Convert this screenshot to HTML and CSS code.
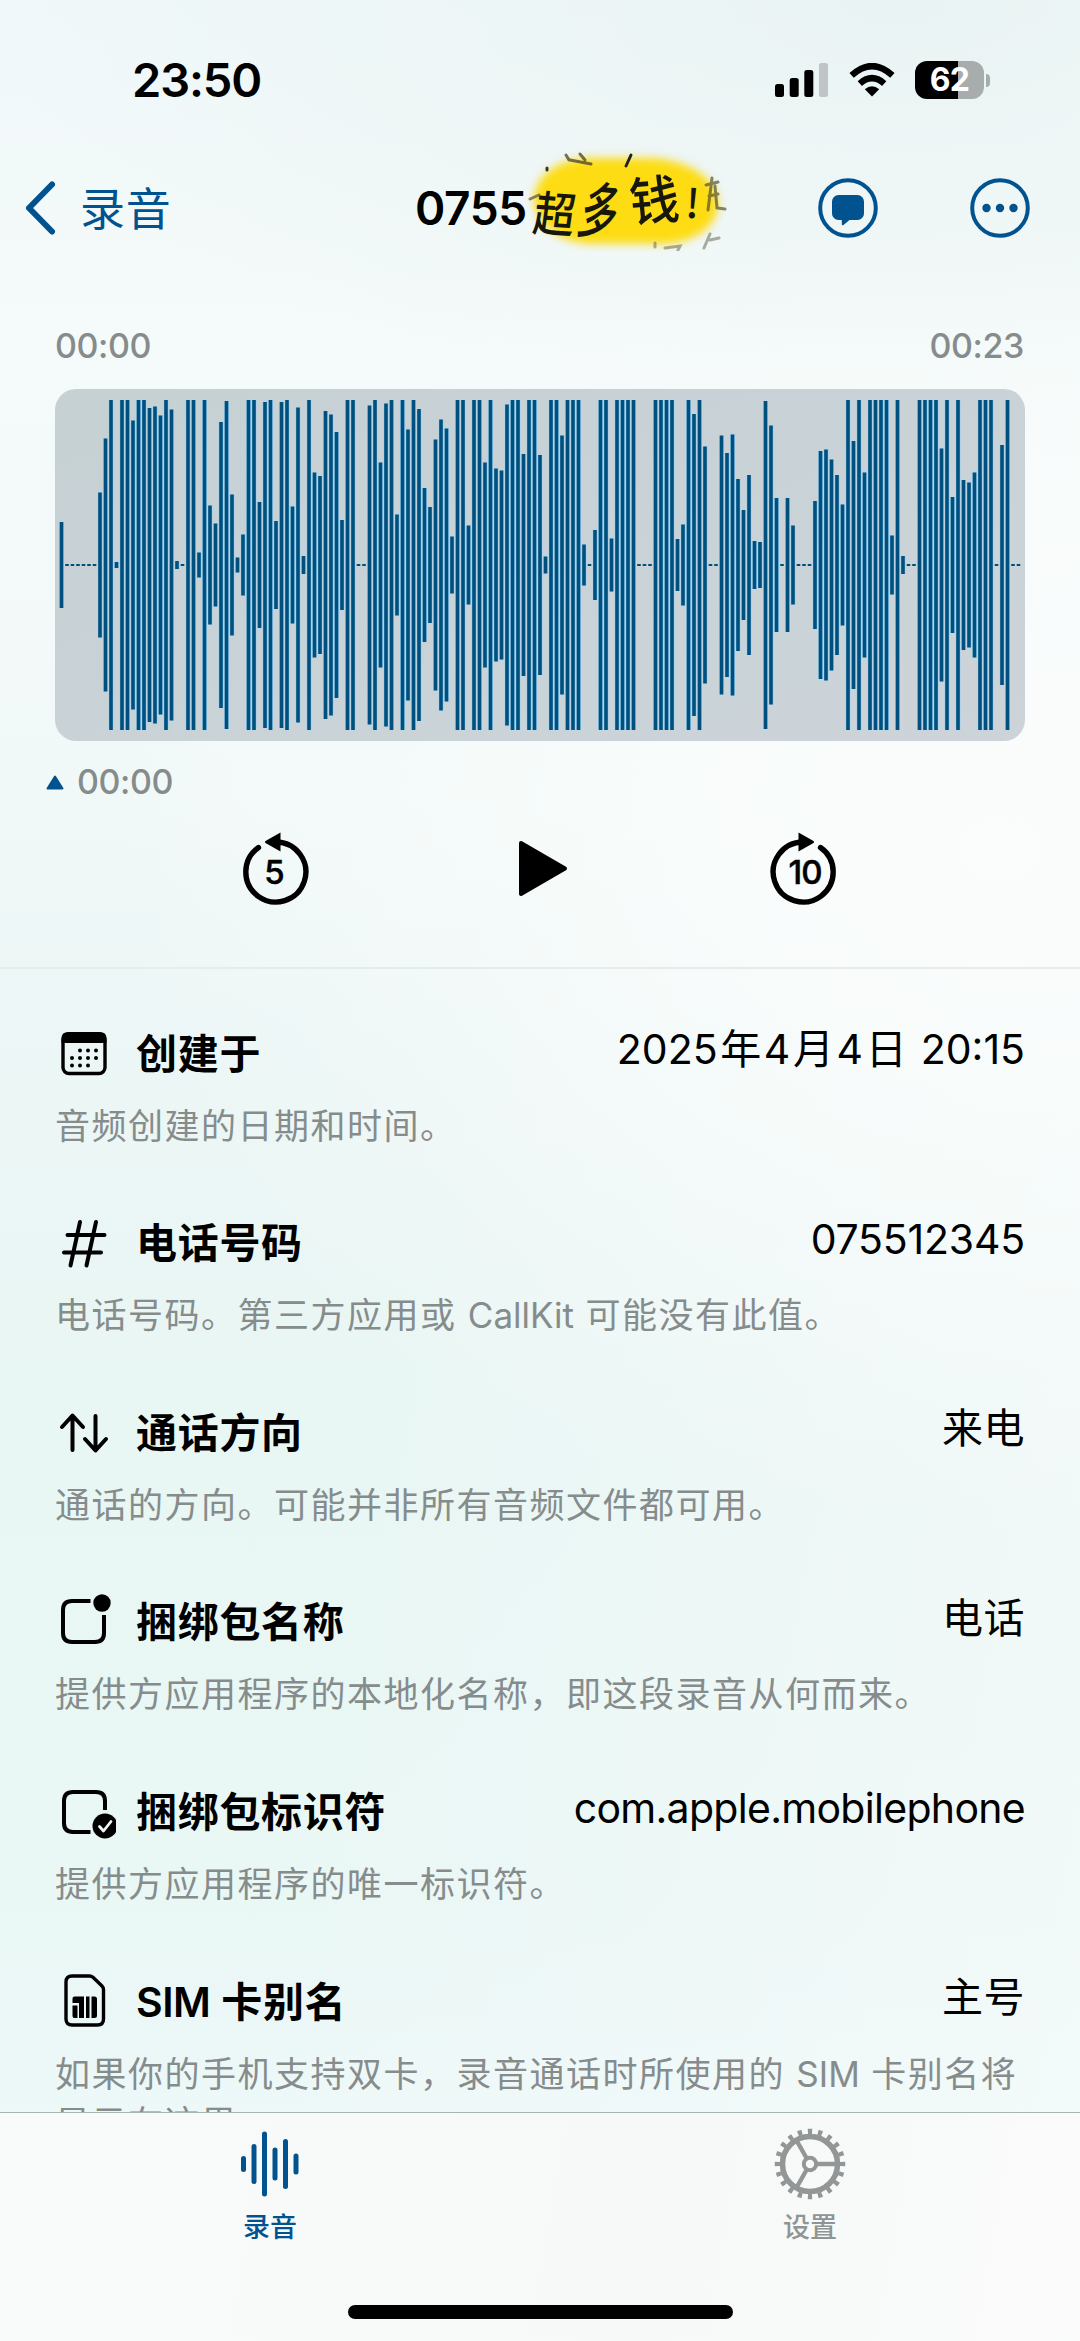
FILE: index.html
```html
<!DOCTYPE html>
<html lang="zh-CN">
<head>
<meta charset="utf-8">
<title>录音</title>
<link rel="stylesheet" href="styles.css">
</head>
<body>
<div class="screen">
  <header class="status">
    <span class="clock">23:50</span>
    <div class="status-icons">
      <svg width="54" height="36" viewBox="0 0 54 36"><rect x="0" y="22" width="9" height="13" rx="2.5"/><rect x="14.7" y="16" width="9" height="19" rx="2.5"/><rect x="29.3" y="8" width="9" height="27" rx="2.5"/><rect x="44" y="1" width="9" height="34" rx="2.5" fill="#bfc5c6"/></svg>
      <svg width="46" height="34" viewBox="0 0 46 34"><path d="M23 33.5 15.8 26.2Q23 20.2 30.2 26.2Z"/><path d="M10.8 20.6Q23 9.8 35.2 20.6" fill="none" stroke="#000" stroke-width="6.4"/><path d="M2.6 12.4Q23-6.2 43.4 12.4" fill="none" stroke="#000" stroke-width="6.4"/></svg>
      <div class="battery"><span class="battery-body">62</span><span class="battery-tip"></span></div>
    </div>
  </header>

  <nav class="nav">
    <a class="back"><svg width="32" height="54" viewBox="0 0 32 54"><path d="M28 3.5 5 27 28 50.5" fill="none" stroke="#00538f" stroke-width="6" stroke-linecap="round" stroke-linejoin="round"/></svg><span>录音</span></a>
    <div class="title">
      <span class="number">0755</span>
      <div class="sticker">
        <svg class="scraps" width="200" height="100" viewBox="0 0 200 100" fill="none" stroke="#3a3720" stroke-width="3" stroke-linecap="round"><path d="M38 4 41 9M42 9 63 13M52 3 57 9" opacity=".7"/><path d="M103 4 98 15" stroke="#222"/><path d="M19 17v2"/><path d="M2 48 11 44" opacity=".6"/><path d="M178 34 190 31M184 27 180 59M181 45 190 43M187 35 189 57 197 58" opacity=".6"/><path d="M127 96v-4M137 97 152 95 150 99M176 97l6-14M182 89l9-2" opacity=".4"/></svg>
        <span class="ink ink-a">超</span><span class="ink ink-b">多</span><span class="ink ink-c">钱</span><span class="ink ink-d">!</span>
      </div>
    </div>
    <div class="actions">
      <svg width="60" height="60" viewBox="0 0 60 60"><circle cx="30" cy="30" r="27.8" fill="none" stroke="#00538f" stroke-width="4"/><path d="M20.500 17h19a6.500 6.500 0 0 1 6.500 6.500v12a6.500 6.500 0 0 1-6.500 6.500h-8l-6 5q-1.700 1-1.700-1V42h-3.300a6.500 6.500 0 0 1-6.500-6.500v-12a6.500 6.500 0 0 1 6.500-6.500Z" fill="#00538f"/></svg>
      <svg width="60" height="60" viewBox="0 0 60 60" fill="#00538f"><circle cx="30" cy="30" r="27.800" fill="none" stroke="#00538f" stroke-width="4"/><circle cx="16.500" cy="30" r="4.200"/><circle cx="30" cy="30" r="4.200"/><circle cx="43.500" cy="30" r="4.200"/></svg>
    </div>
  </nav>

  <section class="player">
    <div class="times"><span>00:00</span><span>00:23</span></div>
    <svg class="wave" id="wave" width="970" height="352" viewBox="0 0 970 352"></svg>
    <div class="cursor"><svg width="18" height="15" viewBox="0 0 18 15"><path d="M9 1.500 16.500 13.500h-15Z" fill="#00538f" stroke="#00538f" stroke-width="2" stroke-linejoin="round"/></svg><span>00:00</span></div>
    <div class="controls">
      <svg width="70" height="80" viewBox="0 0 70 80"><path d="M19.500 17.500A30 30 0 1 0 37 12" fill="none" stroke="#000" stroke-width="5.400" stroke-linecap="round"/><path d="M41.500 2.500v19L26.500 13q-1.300-1 0-2Z"/><text class="skip" x="35" y="54" text-anchor="middle">5</text></svg>
      <svg width="52" height="58" viewBox="0 0 52 58"><path d="M4 3 48 28.500 4 54Z" stroke="#000" stroke-width="4" stroke-linejoin="round"/></svg>
      <svg width="70" height="80" viewBox="0 0 70 80"><path d="M50.500 17.500A30 30 0 1 1 33 12" fill="none" stroke="#000" stroke-width="5.400" stroke-linecap="round"/><path d="M28.500 2.500v19L43.500 13q1.300-1 0-2Z"/><text class="skip" x="35" y="54" text-anchor="middle">10</text></svg>
    </div>
  </section>

  <main class="info">
    <article class="row">
      <div class="head">
        <svg class="icon" viewBox="0 0 64 64"><rect x="11" y="13" width="42" height="39.500" rx="6" fill="none" stroke="#000" stroke-width="3.400"/><path d="M9.500 22v-5q0-6 7-6h31q7 0 7 6v5Z"/><g><circle cx="28" cy="29.500" r="2"/><circle cx="36" cy="29.500" r="2"/><circle cx="44" cy="29.500" r="2"/><circle cx="20" cy="37" r="2"/><circle cx="28" cy="37" r="2"/><circle cx="36" cy="37" r="2"/><circle cx="44" cy="37" r="2"/><circle cx="20" cy="44.500" r="2"/><circle cx="28" cy="44.500" r="2"/><circle cx="36" cy="44.500" r="2"/></g></svg>
        <h2>创建于</h2><span class="value date">2025<i>年</i>4<i>月</i>4<i>日</i> 20:15</span>
      </div>
      <p>音频创建的日期和时间。</p>
    </article>
    <article class="row">
      <div class="head">
        <svg class="icon line" viewBox="0 0 64 64"><path d="M28 11 18.500 54.500M44 11 34.500 54.500M15.500 24h37M12 41.500h37"/></svg>
        <h2>电话号码</h2><span class="value phone">075512345</span>
      </div>
      <p>电话号码。第三方应用或 <span class="latin">CallKit</span> 可能没有此值。</p>
    </article>
    <article class="row">
      <div class="head">
        <svg class="icon line" viewBox="0 0 64 64"><path d="M20.500 50V16M10 27 20.500 15.500 31 27M43.500 16V50M33 39 43.500 50.500 54 39"/></svg>
        <h2>通话方向</h2><span class="value">来电</span>
      </div>
      <p>通话的方向。可能并非所有音频文件都可用。</p>
    </article>
    <article class="row">
      <div class="head">
        <svg class="icon" viewBox="0 0 64 64"><path d="M38.500 11H20q-9 0-9 9v23q0 9 9 9h23q9 0 9-9V25" fill="none" stroke="#000" stroke-width="4"/><circle cx="50" cy="13" r="8.700"/></svg>
        <h2>捆绑包名称</h2><span class="value">电话</span>
      </div>
      <p>提供方应用程序的本地化名称，即这段录音从何而来。</p>
    </article>
    <article class="row">
      <div class="head">
        <svg class="icon" viewBox="0 0 64 64"><path d="M38.500 52H21q-9 0-9-9V21q0-9 9-9h23q9 0 9 9v9" fill="none" stroke="#000" stroke-width="4"/><circle cx="53" cy="46" r="12.500"/><path d="M47.500 46.500 51.500 51 59 41.500" fill="none" stroke="#eef7f6" stroke-width="2.800" stroke-linecap="round" stroke-linejoin="round"/></svg>
        <h2>捆绑包标识符</h2><span class="value bundle">com.apple.mobilephone</span>
      </div>
      <p>提供方应用程序的唯一标识符。</p>
    </article>
    <article class="row">
      <div class="head">
        <svg class="icon" viewBox="0 0 64 64"><path d="M20 7h17.500q2 0 3.500 1.300L50 17q1.500 1.500 1.500 3.500V50q0 6-6 6H20q-6 0-6-6V13q0-6 6-6Z" fill="none" stroke="#000" stroke-width="3.400"/><path d="M22.500 27.500h9.500V49h-5v-15h-6.500v-4.500q0-2 2-2ZM34 27.500h3.500V49H34ZM39.500 27.500h3q2.500 0 2.500 2.500v16.500q0 2.500-2.500 2.500h-3ZM20.500 36.500h5V49h-3q-2 0-2-2Z"/></svg>
        <h2><span class="latin">SIM</span> 卡别名</h2><span class="value">主号</span>
      </div>
      <p>如果你的手机支持双卡，录音通话时所使用的 <span class="latin">SIM</span> 卡别名将显示在这里。</p>
    </article>
  </main>

  <footer class="tabs">
    <div class="tab-items">
      <div class="tab active">
        <svg width="72" height="72" viewBox="0 0 72 72" fill="none" stroke="#00538f" stroke-width="5" stroke-linecap="round"><path d="M9.500 30.500v11M20 18.500v35M30.500 6v60M41 22v28M51.500 13.500v45M62 28v16"/></svg>
        <span>录音</span>
      </div>
      <div class="tab">
        <svg width="72" height="72" viewBox="0 0 72 72" fill="none" stroke="#929696"><circle cx="36" cy="36" r="27.500" stroke-width="5.500"/><circle cx="36" cy="36" r="32.500" stroke-width="5.500" pathLength="220" stroke-dasharray="4.600 6.400" stroke-dashoffset="2.300"/><circle cx="36" cy="36" r="6.200" stroke-width="4"/><path d="M43 36h19M32.500 30 22 11.500M32.500 42 22 60.500" stroke-width="4.400"/></svg>
        <span>设置</span>
      </div>
    </div>
    <div class="home"></div>
  </footer>
</div>
<script src="wave.js"></script>
</body>
</html>
```
FILE: wave.js
```js
// Peak height of every sample, in pixels; 330 is full scale and 2 is silence.
var F = 330, S = 2;
var peaks = [
  86,S,S,S,S,S,S,145,253,F,6,F,F,289,F,F,314,317,299,F,311,8,S,F,F,25,F,119,83,286,
  328,141,15,61,F,F,126,326,F,88,326,F,117,315,18,F,185,178,308,301,266,90,F,F,S,S,319,F,205,323,
  F,101,F,271,F,312,154,116,251,291,273,57,F,F,79,F,F,205,F,193,189,321,F,F,222,F,F,220,17,F,
  F,259,F,F,F,41,S,70,F,F,53,F,F,F,F,S,S,S,F,F,F,F,52,81,F,302,F,237,S,S,
  259,224,261,172,110,180,48,46,328,279,134,S,134,79,S,S,S,128,228,231,211,180,121,F,248,F,185,F,F,F,
  F,59,F,18,S,S,F,F,F,F,233,F,136,F,170,165,185,F,F,F,S,240,F,S,S
];
var svg = document.getElementById('wave');
var glow = '', bars = '';
peaks.forEach(function (h, i) {
  var x = 4.7 + i * 5.5, y = 176 - h / 2;
  if (h > S) glow += '<rect x="' + (x - 0.5) + '" y="' + y + '" width="4.7" height="' + h + '"/>';
  bars += '<rect x="' + x + '" y="' + y + '" width="3.6" height="' + h + '"/>';
});
svg.innerHTML = '<g fill="#93d0f3">' + glow + '</g><g fill="#00507f">' + bars + '</g>';
```
FILE: styles.css
```css
* { box-sizing: border-box; }
body { margin: 0; }
h2, p { margin: 0; }
svg { display: block; flex: none; }
.screen {
  width: 1080px;
  height: 2341px;
  display: flex;
  flex-direction: column;
  overflow: hidden;
  color: #000;
  font-family: Inter, "Noto Sans CJK SC", sans-serif;
  background:
    radial-gradient(900px 420px at 900px 0, #eaf3f3, transparent),
    radial-gradient(900px 700px at 1000px 850px, #fbfdfc, transparent),
    linear-gradient(100deg, rgba(231, 246, 244, 0) 40%, rgba(245, 250, 250, .8) 100%),
    linear-gradient(#f0f8f9 0, #f5fafa 350px, #f1f9f8 800px, #ecf6f6 1050px, #e8f6f4 1450px, #e9f7f5 1900px, #edf8f8 2112px);
}
.status { height: 130px; padding: 50px 90px 20px 132px; display: flex; align-items: center; justify-content: space-between; }
.clock { font-size: 47px; font-weight: 600; line-height: 60px; letter-spacing: -1.1px; }
.status-icons { display: flex; align-items: center; gap: 20px; }
.battery { display: flex; align-items: center; gap: 2px; }
.battery-body { width: 69px; height: 38px; border-radius: 12px; background: linear-gradient(90deg, #000 43.500px, #a7adad 43.500px); color: #fff; font-size: 32px; font-weight: 700; line-height: 38px; text-align: center; letter-spacing: -.8px; }
.battery-tip { width: 4px; height: 13px; border-radius: 0 5px 5px 0; background: #a7adad; }

.nav { height: 156px; padding: 0 50px 0 24px; display: grid; grid-template-columns: 391px 1fr 212px; align-items: center; }
.back { display: flex; align-items: center; gap: 24px; color: #00538f; font-size: 45px; line-height: 60px; letter-spacing: .8px; }
.back span { padding-top: 3px; }
.title { display: flex; align-items: center; }
.number { width: 112px; font-size: 46px; font-weight: 600; letter-spacing: -.4px; line-height: 60px; }
.sticker { position: relative; width: 200px; height: 100px; margin: -14px 0 0 1px; }
.sticker::before { content: ""; position: absolute; left: 6px; top: 7px; width: 184px; height: 86px; border-radius: 62px 80px 62px 66px / 46px 50px 44px 50px; background: #fddc14; filter: blur(4px); }
.scraps { position: absolute; left: 0; top: 0; }
.ink { position: absolute; color: #17170c; font-family: "Noto Sans CJK SC", sans-serif; font-weight: 500; line-height: 48px; font-size: 46px; }
.ink-a { left: 4px; top: 36px; transform: rotate(4deg) skewX(-4deg) scale(.9, 1.050); }
.ink-b { left: 50px; top: 32px; transform: rotate(6deg) skewX(-10deg) scale(.8, 1.350); }
.ink-c { left: 103px; top: 22px; transform: rotate(-5deg) scale(1.080, 1.150); }
.ink-d { left: 158px; top: 26px; transform: rotate(4deg); font-size: 40px; }
.actions { display: flex; justify-content: space-between; }

.player { height: 683px; border-bottom: 2px solid #e5eceb; padding: 38px 55px 0; }
.times { display: flex; justify-content: space-between; padding: 0 1px 0 0; }
.times, .cursor { color: #868b8b; font-size: 34px; font-weight: 500; line-height: 44px; letter-spacing: -.4px; }
.wave { margin-top: 21px; border-radius: 21px; background: linear-gradient(160deg, #c6d1d4, #ccd4da); }
.cursor { display: flex; align-items: center; gap: 13px; margin: 19px 0 0 -9px; }
.controls { margin: 26px 185px 0 184px; display: flex; justify-content: space-between; align-items: center; }
.controls svg:nth-child(2) { margin: -2px 0 0 7px; }
.skip { font-size: 33px; font-weight: 500; letter-spacing: -1px; stroke: #000; stroke-width: .5px; }

.info { flex: 1; min-height: 0; overflow: hidden; padding: 52px 55px 0 52px; }
.row { height: 189.650px; }
.head { height: 64px; display: flex; align-items: center; }
.icon { width: 64px; height: 64px; margin-right: 20px; }
.line { fill: none; stroke: #000; stroke-width: 4; stroke-linecap: round; stroke-linejoin: round; }
h2 { flex: 1; font-size: 41px; font-weight: 600; line-height: 64px; letter-spacing: .7px; white-space: nowrap; padding-top: 1px; }
.value { font-size: 41px; line-height: 64px; margin-top: -8px; letter-spacing: .5px; white-space: nowrap; }
.value i { font-style: normal; margin: 0 2.500px 0 2.700px; }
.date { letter-spacing: 0; }
.phone { letter-spacing: -.2px; }
.bundle { letter-spacing: -.7px; }
.row p { padding: 16.500px 0 0 3px; color: #868c8c; font-size: 35px; line-height: 49.500px; letter-spacing: 1.500px; width: 973px; }
.latin { letter-spacing: 0; }
h2 .latin { letter-spacing: -.5px; }

.tabs { height: 229px; border-top: 1.500px solid #a6b5b3; background: linear-gradient(100deg, #f9fbfb, #f6f9f8 60%, #fafbfa); display: flex; flex-direction: column; align-items: center; justify-content: space-between; padding: 15px 0 22px; }
.tab-items { width: 100%; display: grid; grid-template-columns: 1fr 1fr; }
.tab { display: flex; flex-direction: column; align-items: center; gap: 8px; color: #8f9494; font-size: 27px; font-weight: 500; line-height: 40px; }
.tab.active { color: #00538f; }
.home { width: 385px; height: 14px; border-radius: 7px; background: #000; }
```
